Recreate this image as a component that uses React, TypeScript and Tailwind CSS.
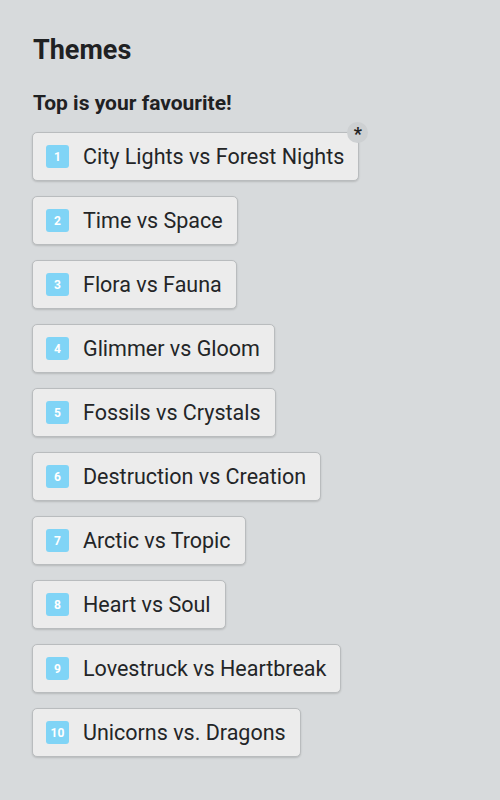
const THEMES = [
  'City Lights vs Forest Nights',
  'Time vs Space',
  'Flora vs Fauna',
  'Glimmer vs Gloom',
  'Fossils vs Crystals',
  'Destruction vs Creation',
  'Arctic vs Tropic',
  'Heart vs Soul',
  'Lovestruck vs Heartbreak',
  'Unicorns vs. Dragons',
]

export default function App() {
  return (
    <main className="min-h-[800px] w-[500px] bg-[#d7dadc] px-[33px] pt-[34px] font-['Roboto',sans-serif] text-[#1f2123]">
      <h1 className="text-[27px] font-bold leading-[32px]">Themes</h1>
      <h2 className="mt-[25px] text-[21px] font-bold leading-[24px]">Top is your favourite!</h2>

      <ol className="mt-[17px] flex flex-col items-start gap-[15px]">
        {THEMES.map((theme, i) => (
          <li
            key={theme}
            className="relative -ml-px flex h-[49px] items-center rounded-[5px] border border-[#b9bcbe] bg-[#ececec] pl-[13px] pr-[14px] shadow-[0_1px_2px_rgba(0,0,0,0.15)]"
          >
            <span className="flex h-[23px] w-[23px] items-center justify-center rounded-[3px] bg-[#80d4f6] text-[12px] font-bold text-white">
              {i + 1}
            </span>
            <span className="ml-[14px] text-[21.5px] leading-none text-[#232527]">{theme}</span>
            {i === 0 ? (
              <span className="absolute -right-[10px] -top-[11px] flex h-[21px] w-[21px] items-start justify-center rounded-full bg-[#cdd0d2] pt-[3px] text-[18px] font-bold leading-none text-[#222]">
                *
              </span>
            ) : null}
          </li>
        ))}
      </ol>
    </main>
  )
}
